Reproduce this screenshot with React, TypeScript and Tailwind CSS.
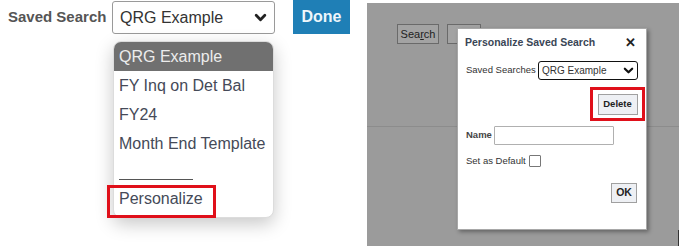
import React from "react";

const Chevron = ({ size = 12, stroke = 3, color = "#333" }: { size?: number; stroke?: number; color?: string }) => (
  <svg width={size} height={size} viewBox="0 0 12 12" fill="none">
    <polyline points="2,4 6,8 10,4" stroke={color} strokeWidth={stroke} strokeLinecap="round" strokeLinejoin="round" />
  </svg>
);

export default function App() {
  return (
    <div className="w-[691px] h-[252px] bg-white flex overflow-hidden" style={{ fontFamily: '"Liberation Sans", Arial, sans-serif' }}>
      {/* Left */}
      <div className="relative w-[367px] h-full shrink-0">
        <div className="flex items-start h-[35px]">
          <div className="ml-[8px] mt-[7px] text-[15px] font-bold text-[#555] leading-[20px] w-[104px] whitespace-nowrap">Saved Search</div>
          <div className="mt-[1px] w-[163px] h-[33px] border border-[#9a9a9a] rounded-[3px] flex items-center pl-[7px] pr-[7px] justify-between">
            <span className="text-[16px] text-[#333]">QRG Example</span>
            <Chevron size={13} stroke={2.6} color="#222" />
          </div>
          <div className="ml-[18px] w-[57px] h-[34px] bg-[#1f7fb6] text-[#eef6fb] font-bold text-[16px] flex items-center justify-center">Done</div>
        </div>
        {/* dropdown */}
        <div className="absolute left-[113px] top-[41px] w-[161px] h-[177px] bg-white rounded-[8px] shadow-[0_6px_18px_rgba(0,0,0,0.22)] border border-[#dcdcdc]">
          <div className="h-[29px] bg-[#707070] rounded-t-[7px] flex items-center pl-[5px] text-[16px] text-[#ececec]">QRG Example</div>
          <div className="h-[29px] flex items-center pl-[5px] text-[16px] text-[#454a58]">FY Inq on Det Bal</div>
          <div className="h-[29px] flex items-center pl-[5px] text-[16px] text-[#454a58]">FY24</div>
          <div className="h-[29px] flex items-center pl-[5px] text-[16px] text-[#454a58]">Month End Template</div>
          <div className="h-[24px] flex items-end pl-[5px] pb-[2px]">
            <div className="w-[74px] h-[1px] bg-[#555]" />
          </div>
          <div className="relative h-[33px] flex items-center pl-[5px] text-[16px] text-[#454a58]">
            Personalize
            <div className="absolute left-[-7px] top-[3px] w-[109px] h-[33px] border-[3px] border-[#e0101a]" />
          </div>
        </div>
      </div>
      {/* Right */}
      <div className="relative mt-[3px] w-[312px] h-[243px] bg-[#9b9b9b] shrink-0">
        <div className="flex gap-[8px] ml-[30px] mt-[21px]">
          <div className="w-[42px] h-[20px] border border-[#6a6a6a] bg-[#a3a3a3] text-[11px] text-[#222] flex items-center justify-center whitespace-nowrap">
            <span>
              Sea<span className="underline">r</span>ch
            </span>
          </div>
          <div className="w-[34px] h-[20px] border border-[#6a6a6a] bg-[#a3a3a3]" />
        </div>
        <div className="mt-[82px] h-[1px] bg-[#8c8c8c]" />
        <div className="absolute right-0 bottom-0 w-[1px] h-[16px] bg-[#333]" />
        {/* dialog */}
        <div className="absolute left-[90px] top-[25px] w-[190px] h-[202px] bg-white border border-[#a8a8a8] shadow-[2px_2px_4px_rgba(0,0,0,0.35)] flex flex-col whitespace-nowrap">
          <div className="h-[27px] flex items-center justify-between pl-[7px] pr-[10px] pt-[1px]">
            <span className="text-[10.5px] font-bold text-[#3a4656]">Personalize Saved Search</span>
            <span className="text-[13px] font-bold text-[#222]">✕</span>
          </div>
          <div className="h-[28px] flex items-center pl-[8px]">
            <span className="text-[9.5px] text-[#333] w-[72px] shrink-0">Saved Searches</span>
            <div className="w-[100px] h-[19px] border-[1.5px] border-[#111] rounded-[3px] flex items-center justify-between pl-[3px] pr-[3px]">
              <span className="text-[10px] text-[#333]">QRG Example</span>
              <Chevron size={11} stroke={2.4} color="#111" />
            </div>
          </div>
          <div className="flex justify-end pr-[1px] mt-[3px]">
            <div className="w-[55px] h-[34px] border-[3px] border-[#e0101a] flex items-center justify-center">
              <div className="w-[40px] h-[21px] bg-[#eef0f4] border border-[#a0a0a0] text-[9.5px] font-bold text-[#222] flex items-center justify-center">Delete</div>
            </div>
          </div>
          <div className="flex items-center pl-[8px] mt-[4px] h-[20px]">
            <span className="text-[9.5px] font-bold text-[#444] w-[28px] shrink-0">Name</span>
            <div className="w-[120px] h-[19px] border border-[#b0b0b0] rounded-[1px]" />
          </div>
          <div className="flex items-center pl-[8px] mt-[10px] h-[12px]">
            <span className="text-[9.5px] text-[#333] w-[63px] shrink-0">Set as Default</span>
            <div className="w-[12px] h-[12px] border border-[#777] rounded-[1px]" />
          </div>
          <div className="flex justify-end pr-[9px] mt-[16px]">
            <div className="w-[26px] h-[20px] bg-[#eef0f4] border border-[#a0a0a0] text-[10.5px] font-bold text-[#222] flex items-center justify-center">OK</div>
          </div>
        </div>
      </div>
    </div>
  );
}
